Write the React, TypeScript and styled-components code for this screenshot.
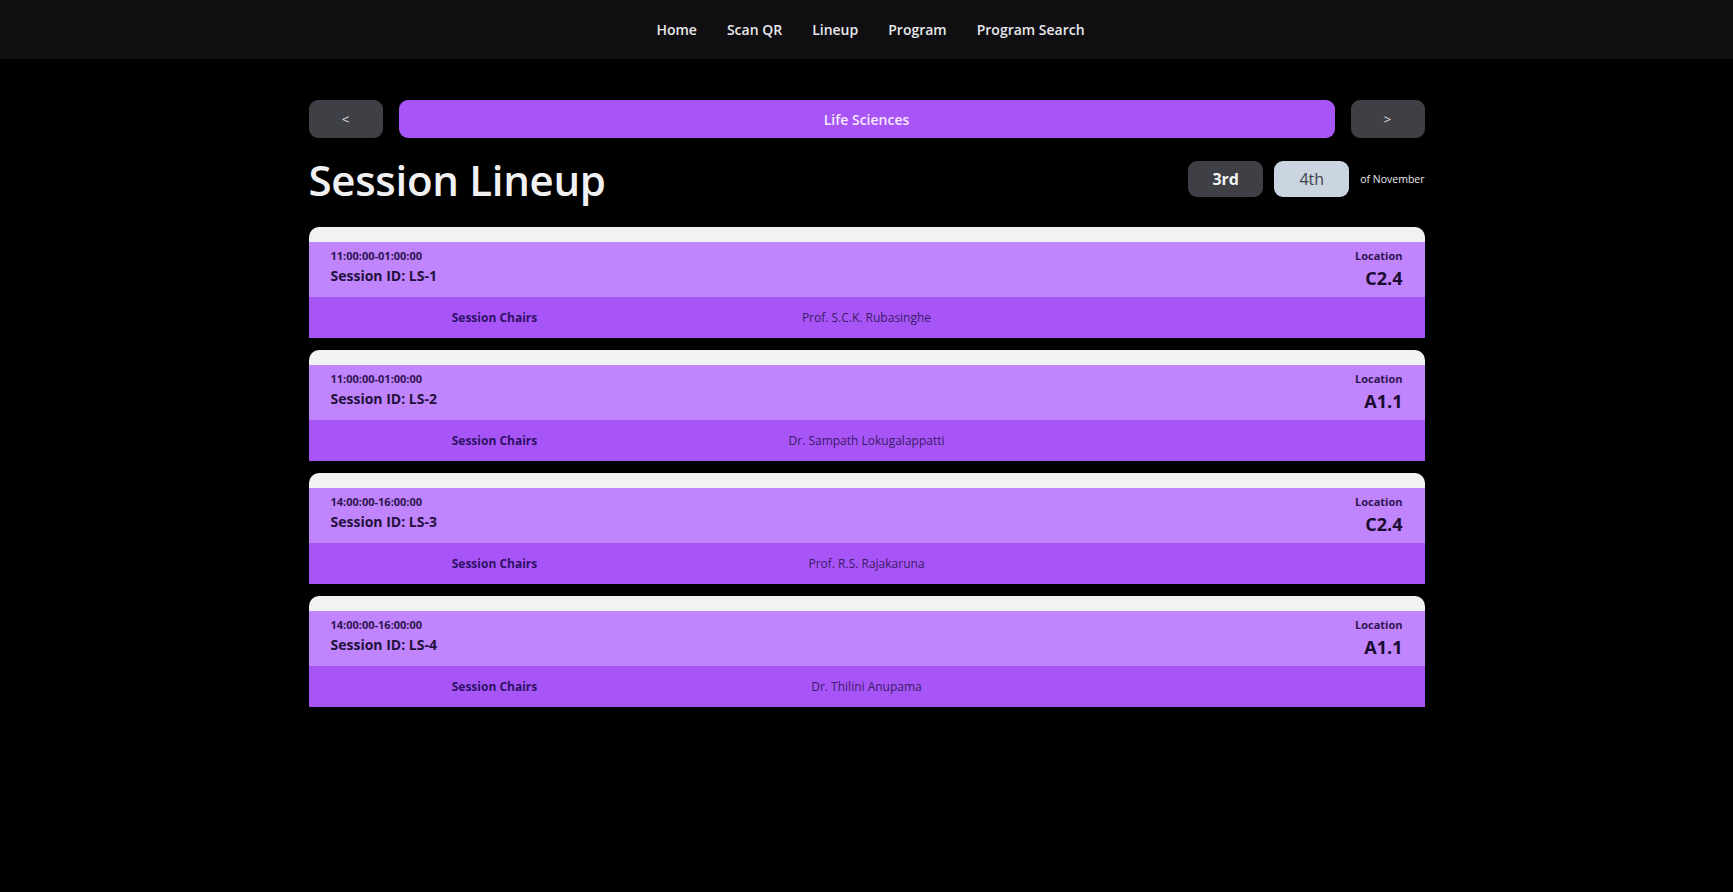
import React, { useState } from 'react';
import styled, { createGlobalStyle } from 'styled-components';

interface Session {
  id: string;
  time: string;
  location: string;
  chair: string;
}

const sessions: Session[] = [
  { id: 'LS-1', time: '11:00:00-01:00:00', location: 'C2.4', chair: 'Prof. S.C.K. Rubasinghe' },
  { id: 'LS-2', time: '11:00:00-01:00:00', location: 'A1.1', chair: 'Dr. Sampath Lokugalappatti' },
  { id: 'LS-3', time: '14:00:00-16:00:00', location: 'C2.4', chair: 'Prof. R.S. Rajakaruna' },
  { id: 'LS-4', time: '14:00:00-16:00:00', location: 'A1.1', chair: 'Dr. Thilini Anupama' },
];

const GlobalStyle = createGlobalStyle`
  body {
    margin: 0;
    background: #000;
    font-family: "Open Sans", "Noto Sans", sans-serif;
  }
`;

const NavBar = styled.nav`
  height: 59px;
  background: #0f0f11;
  display: flex;
  align-items: center;
  justify-content: center;
  gap: 30px;
  padding-left: 8px;
`;

const NavLink = styled.a`
  color: #e8e8ec;
  font-size: 14px;
  font-weight: 600;
  text-decoration: none;
  cursor: pointer;
`;

const Main = styled.main`
  width: 1116px;
  margin: 0 auto;
  padding-top: 41px;
`;

const TopicRow = styled.div`
  display: flex;
  gap: 16px;
  height: 38px;
`;

const ArrowButton = styled.button`
  width: 74px;
  border: none;
  border-radius: 9px;
  background: #3f3f46;
  color: #e4e4e7;
  font-family: inherit;
  font-size: 13px;
  cursor: pointer;
`;

const TopicBar = styled.div`
  flex: 1;
  border-radius: 9px;
  background: #a855f7;
  color: #f5e8ff;
  font-size: 14px;
  font-weight: 600;
  display: flex;
  align-items: center;
  justify-content: center;
`;

const HeadingRow = styled.div`
  display: flex;
  align-items: center;
  justify-content: space-between;
  margin-top: 12px;
  height: 58px;
  margin-bottom: 19px;
`;

const Title = styled.h1`
  margin: 0;
  color: #f1f1f4;
  font-size: 42px;
  font-weight: 600;
  letter-spacing: -0.3px;
`;

const DayGroup = styled.div`
  display: flex;
  align-items: center;
  gap: 11px;
`;

const DayButton = styled.button<{ $active: boolean }>`
  width: 75px;
  height: 36px;
  border: none;
  border-radius: 9px;
  font-family: inherit;
  font-size: 16px;
  font-weight: ${({ $active }) => ($active ? 700 : 500)};
  background: ${({ $active }) => ($active ? '#3f3f46' : '#cbd5e1')};
  color: ${({ $active }) => ($active ? '#f4f4f5' : '#3f3f46')};
  cursor: pointer;
`;

const MonthLabel = styled.span`
  color: #e8e8ec;
  font-size: 10.5px;
`;

const CardList = styled.div`
  display: flex;
  flex-direction: column;
  gap: 12px;
`;

const Card = styled.div`
  background: #f1f2f4;
  border-radius: 10px 10px 0 0;
  padding-top: 15px;
  overflow: hidden;
`;

const CardHeader = styled.div`
  height: 55px;
  background: #c084fc;
  padding: 0 22px;
  display: flex;
  justify-content: space-between;
  align-items: center;
  color: #23113d;
`;

const Stack = styled.div<{ $right?: boolean }>`
  display: flex;
  flex-direction: column;
  align-items: ${({ $right }) => ($right ? 'flex-end' : 'flex-start')};
  gap: 3px;
  margin-top: ${({ $right }) => ($right ? '-2px' : '-6px')};
`;

const SmallLabel = styled.span`
  font-size: 11px;
  font-weight: 700;
  color: #2e1452;
`;

const SessionId = styled.span`
  font-size: 14px;
  font-weight: 700;
`;

const Location = styled.span`
  font-size: 18px;
  font-weight: 700;
  color: #1a0b30;
`;

const ChairRow = styled.div`
  height: 41px;
  background: #a855f7;
  display: grid;
  grid-template-columns: repeat(3, 1fr);
  align-items: center;
  text-align: center;
  font-size: 12px;
`;

const ChairLabel = styled.span`
  font-weight: 700;
  color: #2e1065;
`;

const ChairName = styled.span`
  color: #3b1a66;
`;

const navItems = ['Home', 'Scan QR', 'Lineup', 'Program', 'Program Search'];

const App: React.FC = () => {
  const [day, setDay] = useState('3rd');

  return (
    <>
      <GlobalStyle />
      <NavBar>
        {navItems.map(item => (
          <NavLink key={item}>{item}</NavLink>
        ))}
      </NavBar>
      <Main>
        <TopicRow>
          <ArrowButton>&lt;</ArrowButton>
          <TopicBar>Life Sciences</TopicBar>
          <ArrowButton>&gt;</ArrowButton>
        </TopicRow>
        <HeadingRow>
          <Title>Session Lineup</Title>
          <DayGroup>
            {['3rd', '4th'].map(d => (
              <DayButton key={d} $active={day === d} onClick={() => setDay(d)}>
                {d}
              </DayButton>
            ))}
            <MonthLabel>of November</MonthLabel>
          </DayGroup>
        </HeadingRow>
        <CardList>
          {sessions.map(s => (
            <Card key={s.id}>
              <CardHeader>
                <Stack>
                  <SmallLabel>{s.time}</SmallLabel>
                  <SessionId>Session ID: {s.id}</SessionId>
                </Stack>
                <Stack $right>
                  <SmallLabel>Location</SmallLabel>
                  <Location>{s.location}</Location>
                </Stack>
              </CardHeader>
              <ChairRow>
                <ChairLabel>Session Chairs</ChairLabel>
                <ChairName>{s.chair}</ChairName>
              </ChairRow>
            </Card>
          ))}
        </CardList>
      </Main>
    </>
  );
};

export default App;
